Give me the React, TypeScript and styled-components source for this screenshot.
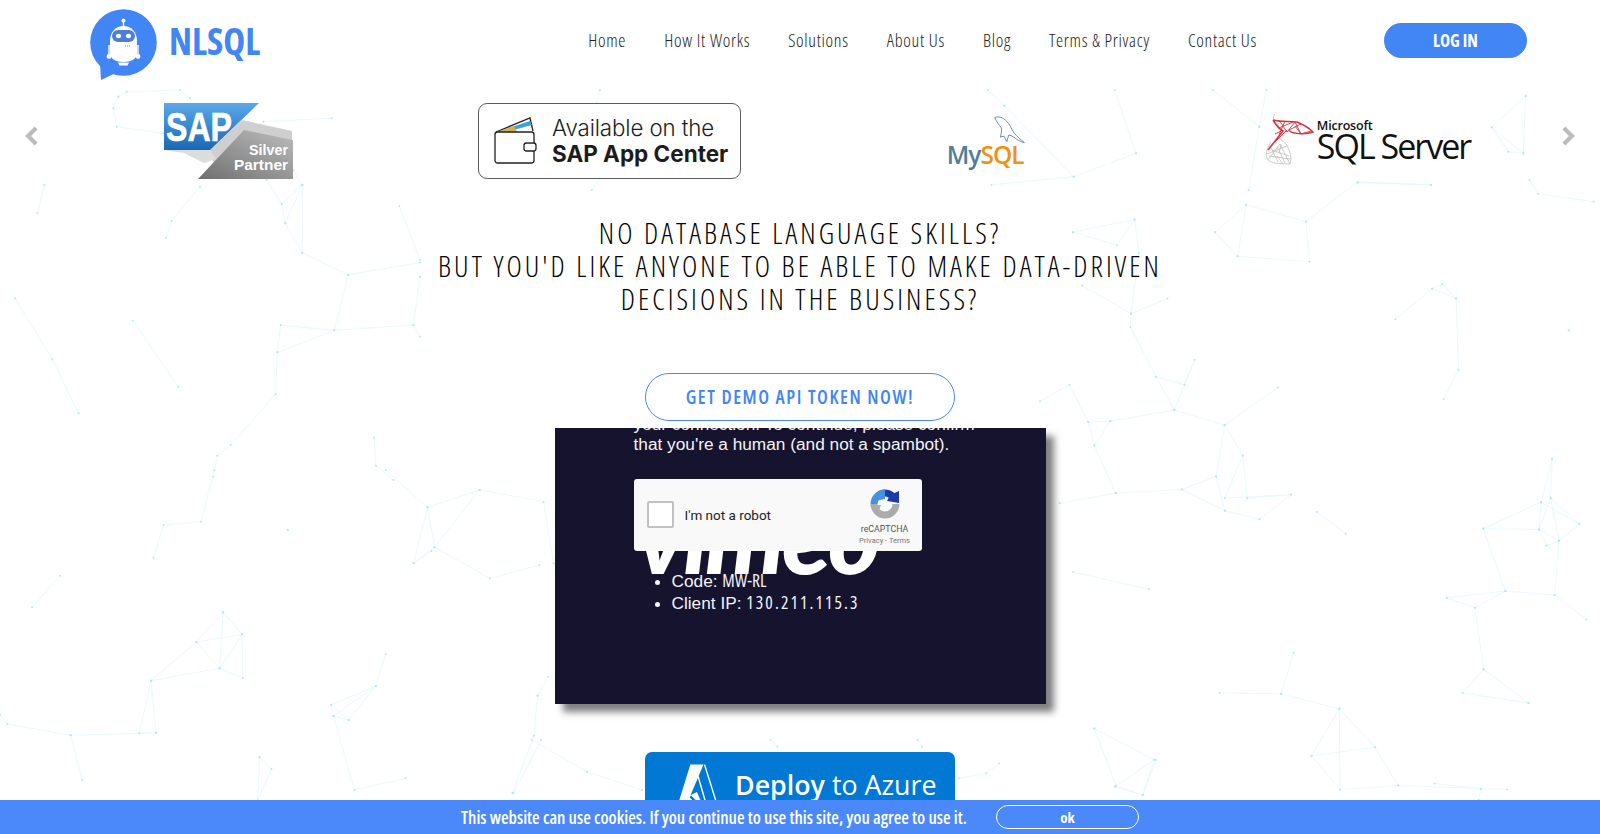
import React from "react";
import styled, { createGlobalStyle } from "styled-components";

const Global = createGlobalStyle`
  html, body { margin: 0; padding: 0; height: 100%; overflow: hidden; background: #fff; }
  #root { height: 100%; }
  * { box-sizing: border-box; }
`;

const NARROW = `"Open Sans", Lato, "Liberation Sans", sans-serif`;

const Page = styled.div`
  position: relative;
  height: 834px;
  overflow: hidden;
  background: #fff;
  font-family: ${NARROW};
  font-stretch: 75%;
`;
const Backdrop = styled.svg`
  position: absolute;
  inset: 0;
  width: 1600px;
  height: 834px;
`;
const Content = styled.div`
  position: relative;
  display: flex;
  flex-direction: column;
  align-items: stretch;
`;
const Header = styled.header`
  display: flex;
  align-items: center;
  height: 85px;
  padding: 0 73px 4px 90px;
`;
const Brand = styled.div`
  display: flex;
  align-items: center;
  gap: 11px;
  margin-top: 8px;
`;
const BrandName = styled.span`
  font-size: 37px;
  font-weight: 700;
  color: #4285f4;
  margin-top: -9px;
`;
const Nav = styled.nav`
  display: flex;
  gap: 38px;
  margin-left: auto;
  margin-top: -1px;
`;
const NavLink = styled.a`
  font-size: 18px;
  letter-spacing: 0.7px;
  color: #222;
  font-weight: 300;
`;
const LoginButton = styled.button`
  margin-left: 127px;
  width: 143px;
  height: 35px;
  border: 0;
  border-radius: 18px;
  background: #4285f4;
  color: #fff;
  font-family: ${NARROW};
  font-stretch: 75%;
  font-weight: 700;
  font-size: 17px;
`;
const Carousel = styled.section`
  position: relative;
  display: grid;
  grid-template-columns: repeat(4, 381px);
  padding: 18px 38px 0;
  height: 94px;
`;
const Slide = styled.div`
  display: flex;
  justify-content: center;
  align-items: flex-start;
`;
const Arrow = styled.svg<{ $side: "left" | "right" }>`
  position: absolute;
  top: 40px;
  ${(p) => (p.$side === "left" ? "left: 24px;" : "right: 24px;")}
  width: 15px;
  height: 22px;
`;
const SapLogoBox = styled.svg`
  display: block;
`;
const AppCenter = styled.div`
  display: flex;
  align-items: center;
  gap: 14px;
  width: 263px;
  height: 76px;
  padding-left: 15px;
  border: 1px solid #5c5c5c;
  border-radius: 9px;
  background: #fff;
  font-family: Inter, "Liberation Sans", sans-serif;
  font-stretch: 100%;
  color: #1c1c1c;
`;
const AppCenterText = styled.div`
  display: flex;
  flex-direction: column;
  font-size: 22.3px;
  line-height: 26px;
  font-weight: 300;
  letter-spacing: -0.1px;
  white-space: nowrap;
  strong { font-weight: 700; font-size: 22.5px; letter-spacing: 0; }
`;
const MySqlLogo = styled.div`
  display: flex;
  flex-direction: column;
  align-items: flex-end;
  width: 80px;
  margin: 11px 0 0 -14px;
  line-height: 1;
  svg { margin-right: -5px; }
`;
const MySqlWord = styled.div`
  font-family: "Open Sans", sans-serif;
  font-stretch: 100%;
  font-size: 24.5px;
  font-weight: 600;
  letter-spacing: -1px;
  margin-top: -6px;
  color: #f29111;
  white-space: nowrap;
  span { color: #4f7d9c; }
`;
const SqlServer = styled.div`
  display: flex;
  align-items: flex-start;
  gap: 3px;
  margin: 9px 0 0 -8px;
`;
const SqlWords = styled.div`
  display: flex;
  flex-direction: column;
  font-family: "Open Sans", sans-serif;
  font-stretch: 100%;
  color: #111;
  padding-top: 8px;
`;
const SqlMicrosoft = styled.span`
  font-size: 12.5px;
  line-height: 11px;
  font-weight: 600;
  letter-spacing: -0.2px;
`;
const SqlName = styled.span`
  font-size: 34px;
  line-height: 31px;
  letter-spacing: -2px;
  white-space: nowrap;
`;
const Heading = styled.h1`
  margin: 37px 0 0;
  text-align: center;
  font-size: 29px;
  line-height: 33px;
  font-weight: 300;
  letter-spacing: 3.05px;
  color: #000;
  text-transform: uppercase;
`;
const DemoButton = styled.button`
  align-self: center;
  margin-top: 58px;
  width: 310px;
  height: 48px;
  border: 1px solid #4a8ae6;
  border-radius: 24px;
  background: #fff;
  color: #4285f4;
  font-family: ${NARROW};
  font-stretch: 75%;
  font-size: 19px;
  font-weight: 600;
  letter-spacing: 1.55px;
  white-space: nowrap;
`;
const VideoPanel = styled.section`
  position: relative;
  align-self: center;
  margin-top: 7px;
  width: 491px;
  height: 276px;
  background: #15132e;
  box-shadow: 8px 8px 7px rgba(0, 0, 0, 0.5);
`;
const VideoClip = styled.div`
  position: absolute;
  inset: 0;
  overflow: hidden;
  padding: 0 0 0 79px;
  color: #f4f4f6;
  font-family: "Liberation Sans", Arial, sans-serif;
  font-stretch: 100%;
  font-size: 17.25px;
  line-height: 20px;
`;
const Message = styled.p`
  margin: -14px 0 0;
  width: 350px;
`;
const Captcha = styled.div`
  position: relative;
  z-index: 2;
  display: flex;
  align-items: center;
  width: 288px;
  height: 72px;
  margin-top: 25px;
  padding-left: 13px;
  border-radius: 3px;
  background: #f9f9f9;
  color: #222;
  font-family: Roboto, sans-serif;
`;
const CaptchaBox = styled.span`
  width: 27px;
  height: 27px;
  margin-top: -2px;
  border: 2px solid #c1c1c1;
  border-radius: 2px;
  background: #fff;
`;
const CaptchaLabel = styled.span`
  margin-left: 11px;
  font-size: 13.5px;
`;
const CaptchaBrand = styled.div`
  margin: 5px 0 0 auto;
  width: 66px;
  display: flex;
  flex-direction: column;
  align-items: center;
  color: #555;
  font-size: 8.8px;
  line-height: 11px;
  padding-right: 8px;
  svg { margin-bottom: 5px; }
  small { font-size: 7.5px; color: #777; white-space: nowrap; }
`;
const VimeoWord = styled.div`
  position: absolute;
  z-index: 1;
  left: 82px;
  top: 57px;
  font-family: Lato, sans-serif;
  font-weight: 900;
  font-style: italic;
  font-size: 100px;
  line-height: 100px;
  letter-spacing: -3px;
  color: #fff;
`;
const InfoList = styled.ul`
  position: relative;
  z-index: 2;
  margin: 19px 0 0;
  padding: 0 0 0 38px;
  li { height: 22.4px; line-height: 22.4px; }
`;
const MonoValue = styled.code<{ $tracking: number }>`
  font-family: "Open Sans", "DejaVu Sans Mono", monospace;
  font-stretch: 75%;
  font-weight: 400;
  font-size: 17.5px;
  line-height: 1;
  letter-spacing: ${(p) => p.$tracking}px;
`;
const AzureButton = styled.div`
  align-self: center;
  display: flex;
  align-items: flex-start;
  gap: 14px;
  margin-top: 48px;
  width: 310px;
  height: 70px;
  padding: 16px 0 0 30px;
  background: #0078d4;
  border-radius: 7px;
  color: #fff;
  font-family: "Open Sans", sans-serif;
  font-stretch: 100%;
  font-size: 26.8px;
  line-height: 34px;
  white-space: nowrap;
  strong { font-weight: 600; }
  svg { margin-top: -5px; }
`;
const CookieBar = styled.div`
  position: fixed;
  left: 0;
  right: 0;
  bottom: 0;
  height: 34px;
  display: flex;
  align-items: center;
  padding-left: 461px;
  background: #4b89fb;
  color: #fff;
  font-size: 17.5px;
  font-weight: 600;
`;
const CookieOk = styled.button`
  margin-left: 29px;
  width: 143px;
  height: 24px;
  border: 1px solid #fff;
  border-radius: 12px;
  background: transparent;
  color: #fff;
  font-family: ${NARROW};
  font-stretch: 75%;
  font-size: 15px;
  font-weight: 700;
`;

type Cluster = { o: [number, number]; s: [number, number]; l: number[][] };
const CLUSTERS: Cluster[] = [
  { o: [1040, 180], s: [2.8, 2.53], l: [
    [92,132,265,100,277,185,255,338,253,372,325,498,376,582,517,620,568,697,580,805,703,796,615,858,518,837,397,783,493,750,517,620],
    [92,132,215,165,265,100],[118,267,255,338,357,300],[325,498,405,518,433,455,376,582],
    [490,132,577,63,745,105,755,207,553,193,577,63],[490,132,553,193],[745,105,890,5,1095,12],
    [0,560,82,518,135,612,197,610,152,672,135,612],[152,672,212,792,397,783],[197,610,376,582],[212,792,55,818],
    [517,620,666,525],[493,750,518,837],[568,697,518,805,703,796],[995,352,1098,275,1165,300,1172,480,1130,555],[1098,275,1127,263,1165,300],
    [1370,0,1395,35,1550,55],[1434,705,1403,815,1397,884,1419,925,1453,913,1510,870,1430,805,1397,884],
    [1434,705,1430,805,1453,913,1441,1050,1530,1112],[1403,815,1241,882,1397,884,1453,913],[1403,815,1510,870],
    [1241,882,1303,1040,1441,1050],[1139,1057,1303,1040,1218,1082,1139,1057],[1218,1082,1242,1238,1183,1298,1368,1323],[1242,1238,1368,1323],
    [503,1298,675,1300,710,1196],[675,1300,838,1338,938,1435,1003,1532,840,1542,760,1457,938,1435],[838,1338,760,1457],[838,1338,840,1542],
    [1003,1532,1308,1542],[1235,1540,1228,1568],[1105,1527,1235,1540],[93,992,305,1035],[152,1388,320,1467,288,1556,213,1533,320,1467],[152,1388,213,1533],
    [1480,380,1481,381],[856,895,775,840],
  ]},
  { o: [0, 470], s: [2.8, 3], l: [
    [600,0,563,155,458,165,430,263],[1080,0,1197,112,1343,60,1522,95,1550,280],
    [1197,112,1217,232,1158,280,1208,243,1343,60],[1197,112,1158,280],[1217,232,1372,325,1510,285],[168,317,90,412],
    [625,427,550,516,678,493,680,625,615,595,550,516],[625,427,678,493],[625,427,615,595,678,493],[550,516,423,632,615,595],
    [423,632,390,790,437,788,423,632],[437,788,198,796,20,762,0,735],[198,796,230,930],
    [1080,552,1052,648,927,705,934,738,976,750,1052,648,934,738],[927,705,976,750],[934,738,992,960,1135,925],
    [727,862,760,897,722,990,727,862],[1505,677,1495,797,1435,968],[1505,677,1535,620],[805,180,806,181],
  ]},
  { o: [0, 180], s: [3, 3], l: [
    [133,15,112,100],[600,20,515,122,498,174],[907,15,845,72,856,130,906,218,1045,284,1260,248],[907,15,907,218],[907,15,856,130],[845,72,800,0],
    [1045,284,1003,451,842,435,832,517,827,643,692,795,652,827,640,890],[832,517,1003,451,1240,435],[1260,290,1240,435,1260,470],
    [45,355,157,538,236,700],[398,422,535,620],[1198,78,1260,240],[1122,773,1128,857,1180,900],
  ]},
  { o: [60, 0], s: [3, 3], l: [
    [175,290,200,275,360,270,390,295],[175,290,160,325,170,380,310,400],[610,365,815,355],[700,510,725,555],
  ]},
  { o: [920, 90], s: [2.8, 3], l: [
    [236,47,190,0],[236,47,430,260,200,285],[605,190,545,0],[605,190,430,260],[950,110,820,0],[950,110,970,0],[950,110,920,300],[1225,278,1430,285],
  ]},
  { o: [1370, 10], s: [3, 3], l: [[467,258,365,352,460,430,467,258],[365,352,415,425,460,430]] },
  { o: [460, 90], s: [3, 3], l: [[420,0,410,40],[420,265,395,300]] },
  { o: [440, 740], s: [2.178, 3], l: [
    [320,95,440,150],[160,160,220,0],[320,95,200,0],[735,20,720,0],[1130,115,1190,100,1218,70],[1470,140,1530,165,1560,60],[1050,20,1040,0],
  ]},
];

function Network() {
  const lines: React.ReactNode[] = [];
  const dots: React.ReactNode[] = [];
  CLUSTERS.forEach((c, ci) =>
    c.l.forEach((pts, li) => {
      const abs = pts.map((v, i) => c.o[i % 2] + v / c.s[i % 2]);
      lines.push(<polyline key={`${ci}-${li}`} points={abs.join(" ")} />);
      for (let i = 0; i < abs.length; i += 2) {
        dots.push(<circle key={`${ci}-${li}-${i}`} cx={abs[i]} cy={abs[i + 1]} r={1} />);
      }
    }),
  );
  return (
    <Backdrop viewBox="0 0 1600 834" aria-hidden>
      <g fill="none" stroke="#bfeaf6" strokeWidth={0.7} opacity={0.42}>{lines}</g>
      <g fill="#a3e0ee" opacity={0.75}>{dots}</g>
    </Backdrop>
  );
}

function BotLogo() {
  return (
    <svg width="68" height="72" viewBox="0 0 68 72">
      <circle cx="33.5" cy="33.5" r="33.3" fill="#4285f4" />
      <path d="M10 54 L11 71 L30 62 Z" fill="#4285f4" />
      <circle cx="33.5" cy="11.5" r="2" fill="#fff" />
      <rect x="32.8" y="12" width="1.4" height="6" fill="#fff" />
      <path d="M20 32c0-9 6-15 13.5-15S47 23 47 32v12c0 6-6 9-13.5 9S20 50 20 44z" fill="#fff" />
      <rect x="22" y="21" width="23" height="12" rx="6" fill="#4d7fd8" />
      <ellipse cx="28.5" cy="27" rx="2.6" ry="2.2" fill="#fff" />
      <ellipse cx="38.5" cy="27" rx="2.6" ry="2.2" fill="#fff" />
      <path d="M19 36v11M48 36v11" stroke="#fff" strokeWidth="1.4" />
      <circle cx="19" cy="47.5" r="2.4" fill="#fff" />
      <circle cx="48" cy="47.5" r="2.4" fill="#fff" />
      <path d="M28 53.5h11l-1.5 3h-8z" fill="#fff" />
      <path d="M35 37h5" stroke="#7a8fb5" strokeWidth="1" strokeDasharray="1 1" />
    </svg>
  );
}

function SapLogo() {
  return (
    <SapLogoBox width="129" height="76" viewBox="0 0 129 76">
      <defs>
        <linearGradient id="sapBlue" x1="0" y1="0" x2="0" y2="1">
          <stop offset="0" stopColor="#5aa7e8" />
          <stop offset="1" stopColor="#1a68b5" />
        </linearGradient>
        <linearGradient id="sapGrey" x1="1" y1="0" x2="0" y2="1">
          <stop offset="0" stopColor="#bdbdbd" />
          <stop offset="1" stopColor="#6f6f6f" />
        </linearGradient>
      </defs>
      <polygon points="78,17 128,28 128,40 50,62 46,47" fill="#cfcfcf" />
      <polygon points="0,47 46,47 52,56 40,60 20,50" fill="#dcdcdc" />
      <polygon points="80,27 129,37 129,76 34,76" fill="url(#sapGrey)" />
      <polygon points="0,0 95,0 46,47 0,47" fill="url(#sapBlue)" />
      <text x="2" y="38" textLength="66" lengthAdjust="spacingAndGlyphs" fontFamily="Liberation Sans, sans-serif" fontWeight="700" fontSize="41" stroke="#fff" strokeWidth="0.6" fill="#fff">SAP</text>
      <text x="85" y="52" textLength="39" lengthAdjust="spacingAndGlyphs" fontFamily="Liberation Sans, sans-serif" fontWeight="700" fontSize="15.5" fill="#fff">Silver</text>
      <text x="70" y="67" textLength="54" lengthAdjust="spacingAndGlyphs" fontFamily="Liberation Sans, sans-serif" fontWeight="700" fontSize="15.5" fill="#fff">Partner</text>
    </SapLogoBox>
  );
}

function WalletIcon() {
  return (
    <svg width="44" height="48" viewBox="0 0 44 48">
      <path d="M2 15L36 1l3 13" fill="#fff" stroke="#222" strokeWidth="1.3" />
      <path d="M3 15L36 4l2 4L12 15z" fill="#3aa3d8" />
      <path d="M3 15l17-6 3 6z" fill="#d2b04a" />
      <rect x="1" y="15" width="39" height="31" rx="2.5" fill="#fff" stroke="#222" strokeWidth="1.3" />
      <rect x="30" y="26" width="12" height="8" rx="2.5" fill="#fff" stroke="#222" strokeWidth="1.3" />
    </svg>
  );
}

function Dolphin() {
  return (
    <svg width="37" height="35" viewBox="0 0 40 34" fill="none" stroke="#5d87a1" strokeWidth="1">
      <path d="M3 2c4-2 9 0 13 4 3 3 5 8 8 13 3 3 7 7 11 10-4-1-8-3-10-5-3-2-5-3-7-3l-2 7-3-6-4 1c1-4 2-7 1-10C8 10 5 7 3 2z" />
    </svg>
  );
}

function SqlFunnel() {
  return (
    <svg width="49" height="54" viewBox="0 0 49 54" fill="none" strokeWidth="0.9">
      <g stroke="#c4c4c4">
        <path d="M10 2C7 5 8 10 14 14M6 30C1 38 0 44 3 48c3 3 10 4 22 4 2-6 0-14-4-20L12 24" />
        <path d="M3 48l12-16 10 20M7 38l17 6M14 42l2-10M18 52l-6-8M2 42l20-8M5 34l8 16M12 34l8 17M4 44l21 3" />
      </g>
      <g stroke="#d6323c">
        <path d="M8 8c8 2 16 1 24 2 5 2 12 6 16 10-8 3-22 2-24-2M8 8c3 5 6 9 10 11L3 38" strokeWidth="1.5" />
        <path d="M14 8l8 12 8-10 6 12 10-3M20 9l-6 14M28 10l-14 6M24 18l12-6M10 30l12-12M18 18l-8 4M30 14l6 8" />
      </g>
    </svg>
  );
}

function RecaptchaIcon() {
  return (
    <svg width="30" height="30" viewBox="0 0 30 30" fill="none" strokeWidth="7">
      <path d="M4 15A11 11 0 0 1 15 4" stroke="#4a90e2" />
      <path d="M15 4a11 11 0 0 1 9 5" stroke="#1c3aa9" />
      <path d="M20 6L29 2V14L17 12z" fill="#1c3aa9" stroke="none" />
      <path d="M8 2L15 0V10L5 12z" fill="#4a90e2" stroke="none" />
      <path d="M26 15A11 11 0 0 1 4 15" stroke="#ababab" />
      <path d="M0 16H11L8 24z" fill="#ababab" stroke="none" />
    </svg>
  );
}

function AzureGlyph() {
  return (
    <svg width="46" height="58" viewBox="0 0 42 52">
      <path d="M14 1H26L7 46H0z" fill="#fff" />
      <path d="M12 30L20 26l9 20H4z" fill="#fff" />
      <path d="M14 30l12 12" stroke="#0078d4" strokeWidth="2" />
      <path d="M27 1L41 46H31L20 8" fill="none" stroke="#fff" strokeWidth="1.3" />
    </svg>
  );
}

const NAV = ["Home", "How It Works", "Solutions", "About Us", "Blog", "Terms & Privacy", "Contact Us"];

export default function App() {
  return (
    <Page>
      <Global />
      <Network />
      <Content>
        <Header>
          <Brand>
            <BotLogo />
            <BrandName>NLSQL</BrandName>
          </Brand>
          <Nav>
            {NAV.map((n) => (
              <NavLink key={n}>{n}</NavLink>
            ))}
          </Nav>
          <LoginButton>LOG IN</LoginButton>
        </Header>
        <Carousel>
          <Arrow $side="left" viewBox="0 0 13 19">
            <path d="M10.5 2.5L3.5 9.5l7 7" fill="none" stroke="#bbb" strokeWidth="3.6" />
          </Arrow>
          <Slide><SapLogo /></Slide>
          <Slide>
            <AppCenter>
              <WalletIcon />
              <AppCenterText>
                <span>Available on the</span>
                <strong>SAP App Center</strong>
              </AppCenterText>
            </AppCenter>
          </Slide>
          <Slide>
            <MySqlLogo>
              <Dolphin />
              <MySqlWord><span>My</span>SQL</MySqlWord>
            </MySqlLogo>
          </Slide>
          <Slide>
            <SqlServer>
              <SqlFunnel />
              <SqlWords>
                <SqlMicrosoft>Microsoft</SqlMicrosoft>
                <SqlName>SQL Server</SqlName>
              </SqlWords>
            </SqlServer>
          </Slide>
          <Arrow $side="right" viewBox="0 0 13 19">
            <path d="M2.5 2.5l7 7-7 7" fill="none" stroke="#bbb" strokeWidth="3.6" />
          </Arrow>
        </Carousel>
        <Heading>
          No database language skills?
          <br />
          But you'd like anyone to be able to make data-driven
          <br />
          decisions in the business?
        </Heading>
        <DemoButton>GET DEMO API TOKEN NOW!</DemoButton>
        <VideoPanel>
          <VideoClip>
            <Message>
              your connection. To continue, please confirm
              <br />
              that you're a human (and not a spambot).
            </Message>
            <Captcha>
              <CaptchaBox />
              <CaptchaLabel>I'm not a robot</CaptchaLabel>
              <CaptchaBrand>
                <RecaptchaIcon />
                <span>reCAPTCHA</span>
                <small>Privacy - Terms</small>
              </CaptchaBrand>
            </Captcha>
            <VimeoWord>vimeo</VimeoWord>
            <InfoList>
              <li>Code: <MonoValue $tracking={0}>MW-RL</MonoValue></li>
              <li>Client IP: <MonoValue $tracking={2.1}>130.211.115.3</MonoValue></li>
            </InfoList>
          </VideoClip>
        </VideoPanel>
        <AzureButton>
          <AzureGlyph />
          <span><strong>Deploy</strong> to Azure</span>
        </AzureButton>
      </Content>
      <CookieBar>
        This website can use cookies. If you continue to use this site, you agree to use it.
        <CookieOk>ok</CookieOk>
      </CookieBar>
    </Page>
  );
}
